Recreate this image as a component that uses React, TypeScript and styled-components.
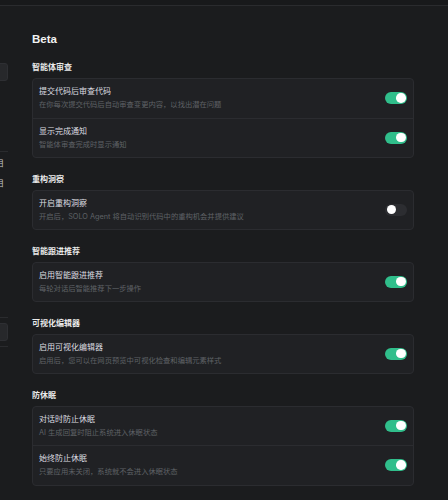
import React, { useState } from 'react';
import styled, { createGlobalStyle } from 'styled-components';

const colors = {
    bg: '#1b1c1e',
    topBar: '#18191b',
    line: '#2a2b2e',
    card: '#202124',
    cardBorder: '#2b2c30',
    title: '#dcdde0',
    sub: '#5f6166',
    head: '#eaeaea',
    green: '#30be8b',
    off: '#2c2d31',
};

const GlobalStyle = createGlobalStyle`
    html, body {
        margin: 0;
        padding: 0;
        background: ${colors.bg};
        font-family: Inter, "Noto Sans CJK SC", sans-serif;
        overflow: hidden;
    }
`;

type Item = { title: string; desc: string; on: boolean };
type Section = { name: string; items: Item[] };

const sections: Section[] = [
    {
        name: '智能体审查',
        items: [
            { title: '提交代码后审查代码', desc: '在你每次提交代码后自动审查变更内容，以找出潜在问题', on: true },
            { title: '显示完成通知', desc: '智能体审查完成时显示通知', on: true },
        ],
    },
    {
        name: '重构洞察',
        items: [
            { title: '开启重构洞察', desc: '开启后，SOLO Agent 将自动识别代码中的重构机会并提供建议', on: false },
        ],
    },
    {
        name: '智能跟进推荐',
        items: [{ title: '启用智能跟进推荐', desc: '每轮对话后智能推荐下一步操作', on: true }],
    },
    {
        name: '可视化编辑器',
        items: [
            { title: '启用可视化编辑器', desc: '启用后，您可以在网页预览中可视化检查和编辑元素样式', on: true },
        ],
    },
    {
        name: '防休眠',
        items: [
            { title: '对话时防止休眠', desc: 'AI 生成回复时阻止系统进入休眠状态', on: true },
            { title: '始终防止休眠', desc: '只要应用未关闭，系统就不会进入休眠状态', on: true },
        ],
    },
];

function Switch({ initial }: { initial: boolean }) {
    const [on, setOn] = useState(initial);
    return (
        <Track $on={on} onClick={() => setOn(!on)}>
            <Knob />
        </Track>
    );
}

export default function App() {
    return (
        <>
            <GlobalStyle />
            <TopBar />
            <Layout>
                <Sidebar>
                    <SideBox style={{ marginTop: 57 }} />
                    <SideLine style={{ marginTop: 70 }} />
                    <SideText style={{ marginTop: 5 }}>启用项目</SideText>
                    <SideText style={{ marginTop: 8 }}>查看项目</SideText>
                    <SideLine style={{ marginTop: 128 }} />
                    <SideBox style={{ marginTop: 5 }} />
                    <SideLine style={{ marginTop: 5 }} />
                </Sidebar>
                <Main>
                    <PageTitle>Beta</PageTitle>
                    {sections.map((s) => (
                        <Group key={s.name}>
                            <GroupTitle>{s.name}</GroupTitle>
                            <Card>
                                {s.items.map((it) => (
                                    <Row key={it.title}>
                                        <Texts>
                                            <RowTitle>{it.title}</RowTitle>
                                            <RowDesc>{it.desc}</RowDesc>
                                        </Texts>
                                        <Switch initial={it.on} />
                                    </Row>
                                ))}
                            </Card>
                        </Group>
                    ))}
                </Main>
            </Layout>
        </>
    );
}

const TopBar = styled.div`
    height: 5px;
    background: ${colors.topBar};
    border-bottom: 1px solid ${colors.line};
`;

const Layout = styled.div`
    display: flex;
    height: 494px;
`;

const Sidebar = styled.div`
    width: 8px;
    flex-shrink: 0;
    overflow: hidden;
    display: flex;
    flex-direction: column;
    align-items: flex-end;
`;

const SideBox = styled.div`
    width: 160px;
    height: 16px;
    flex-shrink: 0;
    background: #27282b;
    border: 1px solid #2e2f33;
    border-radius: 3px;
`;

const SideLine = styled.div`
    width: 160px;
    height: 1px;
    flex-shrink: 0;
    background: ${colors.line};
`;

const SideText = styled.div`
    width: 160px;
    text-align: right;
    font-size: 8px;
    line-height: 12px;
    color: #c8c9cc;
    white-space: nowrap;
    margin-right: 4px;
`;

const Main = styled.div`
    flex: 1;
    padding: 26px 34px 0 24px;
`;

const PageTitle = styled.div`
    font-family: "Liberation Sans", "Noto Sans CJK SC", sans-serif;
    font-size: 11.5px;
    line-height: 14px;
    font-weight: 700;
    color: #f2f2f2;
    margin-bottom: 15px;
`;

const Group = styled.section`
    margin-bottom: 14.5px;
`;

const GroupTitle = styled.div`
    font-size: 8px;
    line-height: 12px;
    font-weight: 700;
    color: ${colors.head};
    margin-bottom: 5px;
`;

const Card = styled.div`
    background: ${colors.card};
    border: 1px solid ${colors.cardBorder};
    border-radius: 4px;
`;

const Row = styled.div`
    display: flex;
    align-items: center;
    justify-content: space-between;
    padding: 6px 6px 6.5px;
    & + & {
        border-top: 1px solid ${colors.cardBorder};
    }
`;

const Texts = styled.div`
    display: flex;
    flex-direction: column;
    gap: 2px;
`;

const RowTitle = styled.div`
    font-size: 8px;
    line-height: 12px;
    color: ${colors.title};
`;

const RowDesc = styled.div`
    font-size: 7.3px;
    line-height: 12px;
    color: ${colors.sub};
`;

const Track = styled.div<{ $on: boolean }>`
    width: 22px;
    height: 12px;
    border-radius: 6px;
    background: ${(p) => (p.$on ? colors.green : colors.off)};
    display: flex;
    align-items: center;
    justify-content: ${(p) => (p.$on ? 'flex-end' : 'flex-start')};
    padding: 0 1.5px;
    box-sizing: border-box;
    cursor: pointer;
    flex-shrink: 0;
`;

const Knob = styled.div`
    width: 9.5px;
    height: 9.5px;
    border-radius: 50%;
    background: #fff;
`;
